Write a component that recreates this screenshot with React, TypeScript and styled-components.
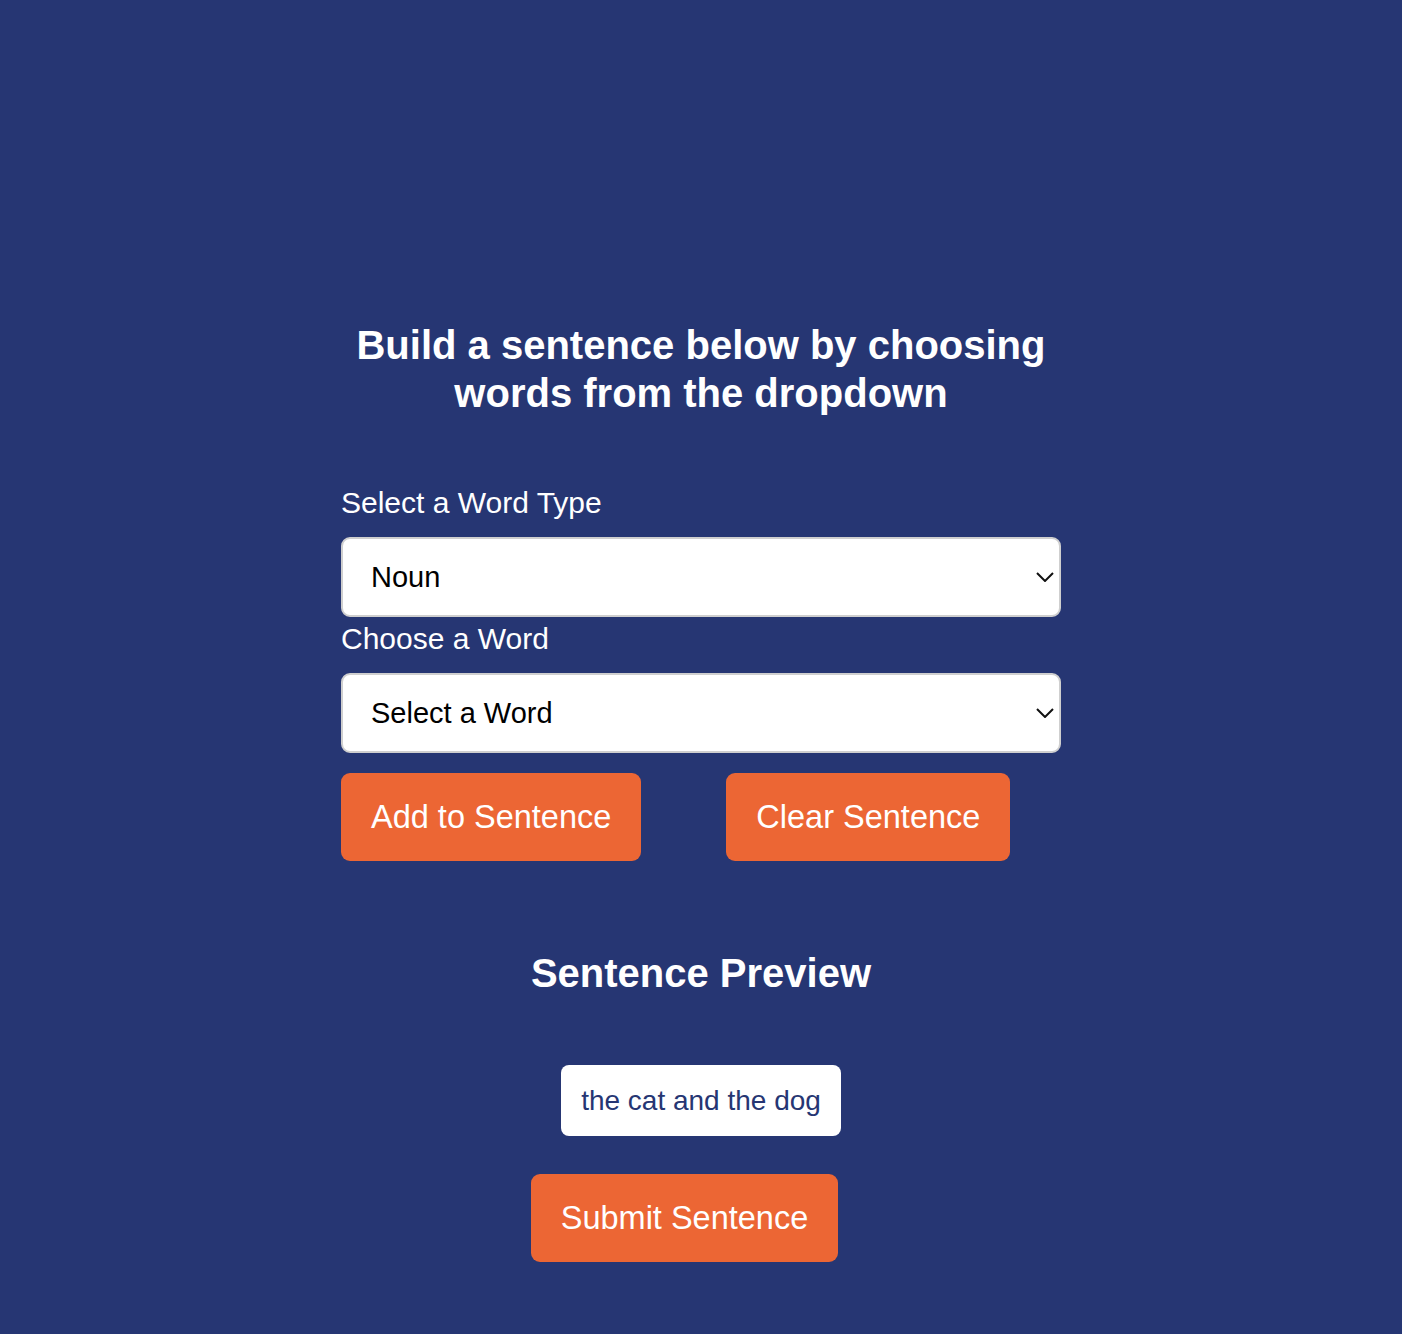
import React, { useState } from 'react';
import styled, { createGlobalStyle } from 'styled-components';

const GlobalStyle = createGlobalStyle`
  html, body {
    margin: 0;
    padding: 0;
    background: #263673;
  }
  body {
    font-family: 'Liberation Sans', Arial, sans-serif;
  }
`;

const Page = styled.div`
  min-height: 1334px;
  background: #263673;
  display: flex;
  flex-direction: column;
  align-items: center;
  padding-top: 321px;
  box-sizing: border-box;
`;

const Title = styled.h1`
  margin: 0;
  width: 720px;
  text-align: center;
  color: #fff;
  font-size: 40px;
  line-height: 48px;
  font-weight: 700;
`;

const Form = styled.div`
  width: 720px;
  margin-top: 68px;
  display: flex;
  flex-direction: column;
`;

const Label = styled.label`
  color: #fff;
  font-size: 30px;
  line-height: 36px;
  margin-bottom: 16px;
`;

const SelectWrap = styled.div`
  position: relative;
  height: 80px;
  margin-bottom: 4px;
`;

const Select = styled.select`
  appearance: none;
  width: 100%;
  height: 100%;
  box-sizing: border-box;
  border: 2px solid #cfcfcf;
  border-radius: 9px;
  background: #fff;
  color: #000;
  font-family: 'Liberation Sans', Arial, sans-serif;
  font-size: 29px;
  padding: 0 28px;
  outline: none;
`;

const Chevron = styled.svg`
  position: absolute;
  right: 7px;
  top: 50%;
  width: 18px;
  height: 10px;
  margin-top: -5px;
  pointer-events: none;
`;

const ButtonRow = styled.div`
  display: flex;
  gap: 85px;
  margin-top: 16px;
`;

const OrangeButton = styled.button<{ $shift?: number }>`
  height: 88px;
  padding: 0 30px;
  border: none;
  border-radius: 9px;
  background: #ec6634;
  color: #fff;
  font-family: 'Liberation Sans', Arial, sans-serif;
  font-size: 32.5px;
  cursor: pointer;
  margin-right: ${p => (p.$shift ? `${p.$shift}px` : '0')};
`;

const PreviewTitle = styled.h2`
  margin: 88px 0 0;
  color: #fff;
  font-size: 40px;
  line-height: 48px;
  font-weight: 700;
`;

const PreviewBox = styled.div`
  margin-top: 68px;
  background: #fff;
  border-radius: 8px;
  padding: 0 20px;
  height: 71px;
  display: flex;
  align-items: center;
  color: #263673;
  font-size: 28px;
`;

const SubmitWrap = styled.div`
  margin-top: 38px;
`;

const ChevronIcon = () => (
  <Chevron viewBox="0 0 18 10">
    <path d="M1 1l8 8 8-8" fill="none" stroke="#111" strokeWidth="2" />
  </Chevron>
);

export default function App() {
  const [type, setType] = useState('Noun');
  const [word, setWord] = useState('');

  return (
    <>
      <GlobalStyle />
      <Page>
        <Title>Build a sentence below by choosing words from the dropdown</Title>
        <Form>
          <Label>Select a Word Type</Label>
          <SelectWrap>
            <Select value={type} onChange={e => setType(e.target.value)}>
              <option>Noun</option>
              <option>Verb</option>
              <option>Adjective</option>
            </Select>
            <ChevronIcon />
          </SelectWrap>
          <Label>Choose a Word</Label>
          <SelectWrap>
            <Select value={word} onChange={e => setWord(e.target.value)}>
              <option value="">Select a Word</option>
              <option value="cat">cat</option>
              <option value="dog">dog</option>
            </Select>
            <ChevronIcon />
          </SelectWrap>
          <ButtonRow>
            <OrangeButton>Add to Sentence</OrangeButton>
            <OrangeButton>Clear Sentence</OrangeButton>
          </ButtonRow>
        </Form>
        <PreviewTitle>Sentence Preview</PreviewTitle>
        <PreviewBox>the cat and the dog</PreviewBox>
        <SubmitWrap>
          <OrangeButton $shift={33}>Submit Sentence</OrangeButton>
        </SubmitWrap>
      </Page>
    </>
  );
}
